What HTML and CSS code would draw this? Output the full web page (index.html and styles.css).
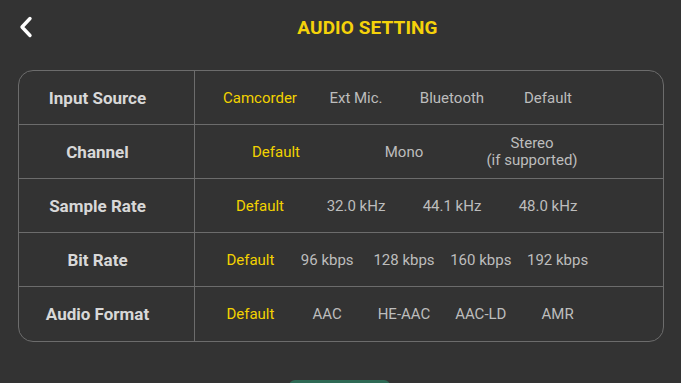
FILE: index.html
```html
<!DOCTYPE html>
<html>
<head>
<meta charset="utf-8">
<link rel="stylesheet" href="styles.css">
</head>
<body>
<div class="screen">
  <header class="header">
    <div class="back">
      <svg width="16" height="22" viewBox="0 0 16 22"><path d="M12 2.5 L4 11 L12 19.5" fill="none" stroke="#ffffff" stroke-width="3.4" stroke-linecap="round" stroke-linejoin="round"/></svg>
    </div>
    <h1 class="title">AUDIO SETTING</h1>
  </header>
  <main class="content">
    <div class="table">
      <div class="row">
        <div class="label">Input Source</div>
        <div class="options cols4">
          <span class="opt sel">Camcorder</span>
          <span class="opt">Ext Mic.</span>
          <span class="opt">Bluetooth</span>
          <span class="opt">Default</span>
        </div>
      </div>
      <div class="row">
        <div class="label">Channel</div>
        <div class="options cols3">
          <span class="opt sel">Default</span>
          <span class="opt">Mono</span>
          <span class="opt two">Stereo<br>(if supported)</span>
        </div>
      </div>
      <div class="row">
        <div class="label">Sample Rate</div>
        <div class="options cols4">
          <span class="opt sel">Default</span>
          <span class="opt">32.0 kHz</span>
          <span class="opt">44.1 kHz</span>
          <span class="opt">48.0 kHz</span>
        </div>
      </div>
      <div class="row">
        <div class="label">Bit Rate</div>
        <div class="options cols5">
          <span class="opt sel">Default</span>
          <span class="opt">96 kbps</span>
          <span class="opt">128 kbps</span>
          <span class="opt">160 kbps</span>
          <span class="opt">192 kbps</span>
        </div>
      </div>
      <div class="row last">
        <div class="label">Audio Format</div>
        <div class="options cols5">
          <span class="opt sel">Default</span>
          <span class="opt">AAC</span>
          <span class="opt">HE-AAC</span>
          <span class="opt">AAC-LD</span>
          <span class="opt">AMR</span>
        </div>
      </div>
    </div>
    <div class="button"></div>
  </main>
</div>
</body>
</html>
```
FILE: styles.css
```css
html, body {
  margin: 0;
  padding: 0;
  background: #333333;
  overflow: hidden;
}
.screen {
  width: 681px;
  height: 383px;
  overflow: hidden;
  font-family: Roboto, "Liberation Sans", sans-serif;
  background: #333333;
}
.header {
  height: 55px;
  display: flex;
  align-items: center;
}
.back {
  width: 54px;
  display: flex;
  align-items: center;
  padding-left: 18px;
  box-sizing: border-box;
  margin-top: -1px;
}
.back svg { display: block; }
.title {
  flex: 1;
  margin: 0;
  text-align: center;
  color: #f5d20a;
  font-size: 19px;
  font-weight: 700;
  letter-spacing: 0.1px;
}
.content {
  padding: 15px 17px 0 18px;
}
.table {
  border: 1px solid #6c6c6c;
  border-radius: 15px;
  overflow: hidden;
}
.row {
  display: grid;
  grid-template-columns: 176px 1fr;
  height: 53px;
  border-bottom: 1px solid #6c6c6c;
}
.row.last { border-bottom: none; height: 54px; }
.label {
  border-right: 1px solid #6c6c6c;
  display: flex;
  align-items: center;
  justify-content: center;
  padding-right: 18px;
  color: #d8d8d8;
  font-size: 17px;
  font-weight: 700;
}
.options {
  display: grid;
  align-items: center;
  padding: 0 67px 0 17px;
}
.cols3 { grid-template-columns: repeat(3, 1fr); }
.cols4 { grid-template-columns: repeat(4, 1fr); }
.cols5 { grid-template-columns: repeat(5, 1fr); }
.opt {
  text-align: center;
  color: #bdbdbd;
  font-size: 15px;
  white-space: nowrap;
}
.opt.sel { color: #f2d200; }
.opt.two { line-height: 17px; }
.button {
  width: 101px;
  height: 30px;
  margin: 38px auto 0;
  background: #2e6a55;
  border-radius: 6px;
  position: relative;
  left: -2px;
}
```
